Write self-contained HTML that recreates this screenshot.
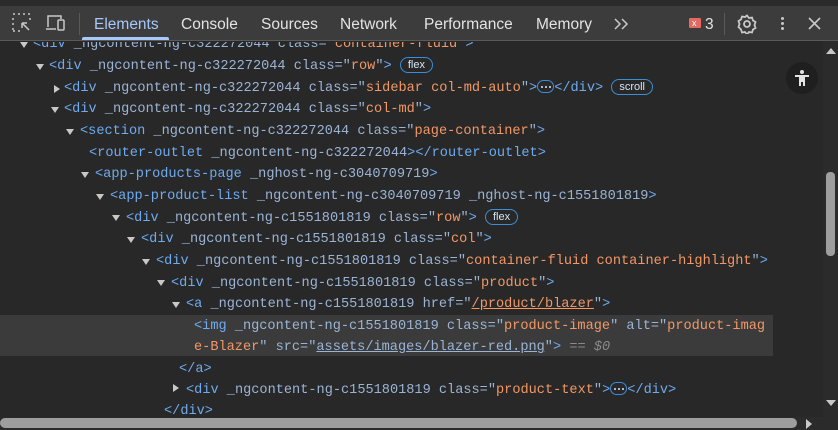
<!DOCTYPE html>
<html><head><style>
*{margin:0;padding:0;box-sizing:border-box}
body{width:838px;height:430px;background:#282828;overflow:hidden;position:relative;font-family:"Liberation Sans",sans-serif}
.top{position:absolute;left:0;top:0;width:838px;height:41px;background:#3c3c3c;border-bottom:1px solid #5a5a5a}
.top .strip{position:absolute;left:0;top:0;width:838px;height:6px;background:#2b2b2b}
.tab{position:absolute;top:16px;font-size:15.5px;color:#e3e3e3}
.l{position:absolute;white-space:pre;font-family:"Liberation Mono",monospace;font-size:13.6px;line-height:21.7px;color:#9ab4d6;margin-top:2px}
.t{color:#6eabf0}.v{color:#f29766}.a{color:#9ab4d6}.u{text-decoration:underline}
.tri{position:absolute;width:0;height:0;border-left:4px solid transparent;border-right:4px solid transparent;border-top:6px solid #c8c8c8;margin-top:2px}
.tr{position:absolute;width:0;height:0;border-top:4px solid transparent;border-bottom:4px solid transparent;border-left:6px solid #c8c8c8;margin-top:2px}
.badge{display:inline-block;border:1px solid #3c8ed6;border-radius:9px;font-size:11px;line-height:14px;padding:0 7px;color:#d6e6f5;vertical-align:1px;font-family:"Liberation Sans",sans-serif}
.dots{display:inline-block;position:relative;border:1px solid #3c8ed6;border-radius:8px;width:17px;height:13px;vertical-align:-2px}
.dots::after{content:"";position:absolute;left:3px;top:5px;width:2px;height:2px;background:#d6e6f5;border-radius:1px;box-shadow:4px 0 0 #d6e6f5,8px 0 0 #d6e6f5}
</style></head><body>
<div class="top"><div class="strip"></div>
<svg style="position:absolute;left:12px;top:13px" width="20" height="20" viewBox="0 0 20 20" fill="none" stroke="#c8c8c8" stroke-width="1.5"><path d="M1 1h2M6 1h2M11 1h2M16 1h2M1 5v2M1 10v2M1 15v2M18 5v2M1 18h2M6 18h2" /><path d="M10 10l7 7M10 10h5M10 10v5"/></svg>
<svg style="position:absolute;left:45px;top:14px" width="22" height="18" viewBox="0 0 22 18" fill="none" stroke="#c8c8c8" stroke-width="1.5"><path d="M3 13V2h13v3M1 15h10"/><rect x="13" y="6" width="6" height="10" rx="1"/></svg>
<div style="position:absolute;left:79px;top:13px;width:1px;height:22px;background:#5a5a5a"></div>
<div class="tab" style="left:94px;color:#a8c7fa">Elements</div>
<div style="position:absolute;left:82px;top:37px;width:87px;height:3px;background:#a8c7fa;border-radius:2px 2px 0 0"></div>
<div class="tab" style="left:181px">Console</div>
<div class="tab" style="left:261px">Sources</div>
<div class="tab" style="left:340px">Network</div>
<div class="tab" style="left:424px">Performance</div>
<div class="tab" style="left:536px">Memory</div>
<svg style="position:absolute;left:613px;top:18px" width="16" height="12" viewBox="0 0 16 12" fill="none" stroke="#c8c8c8" stroke-width="1.5"><path d="M2 1l5 5-5 5M9 1l5 5-5 5"/></svg>
<div style="position:absolute;left:689px;top:18px;width:12px;height:10px;background:#e46962;border-radius:1px"></div>
<div style="position:absolute;left:692px;top:13px;font-size:9px;color:#fff;line-height:20px">x</div>
<div class="tab" style="left:705px;top:16px;color:#e3e3e3">3</div>
<div style="position:absolute;left:724px;top:13px;width:1px;height:22px;background:#5a5a5a"></div>
<svg style="position:absolute;left:737px;top:14px" width="20" height="20" viewBox="0 0 20 20" fill="none" stroke="#c8c8c8" stroke-width="1.8"><circle cx="10" cy="10" r="3"/><path d="M10 1.5l2 2.5 3-.5 1 3 2.5 1.5-1 3 1 3-2.5 1.5-1 3-3-.5-2 2.5-2-2.5-3 .5-1-3L1.5 13l1-3-1-3L4 5.5l1-3 3 .5z"/></svg>
<div style="position:absolute;left:781px;top:17px;width:3px;height:3px;background:#c8c8c8;border-radius:2px;box-shadow:0 5px 0 #c8c8c8,0 10px 0 #c8c8c8"></div>
<svg style="position:absolute;left:808px;top:17px" width="13" height="13" viewBox="0 0 13 13" stroke="#c8c8c8" stroke-width="1.6"><path d="M1 1l11 11M12 1L1 12"/></svg>
</div>
<div style="position:absolute;left:0;top:315px;width:773px;height:41px;background:#3b3b3b"></div>
<div class="tri" style="left:20px;top:40px"></div><div class="l" style="left:33px;top:32px;clip-path:inset(8px 0 0 0)"><span class="t">&lt;div</span> _ngcontent-ng-c322272044 class=<span class="v">"container-fluid"</span><span class="t">&gt;</span></div>
<div class="tri" style="left:36px;top:62px"></div><div class="l" style="left:49px;top:54px"><span class="t">&lt;div</span> _ngcontent-ng-c322272044 class="<span class="v">row</span>"<span class="t">&gt;</span> <span class="badge">flex</span></div>
<div class="tr" style="left:54px;top:83px"></div><div class="l" style="left:64px;top:76px"><span class="t">&lt;div</span> _ngcontent-ng-c322272044 class="<span class="v">sidebar col-md-auto</span>"<span class="t">&gt;</span><span class="dots"></span><span class="t">&lt;/div&gt;</span> <span class="badge">scroll</span></div>
<div class="tri" style="left:51px;top:105px"></div><div class="l" style="left:64px;top:97px"><span class="t">&lt;div</span> _ngcontent-ng-c322272044 class="<span class="v">col-md</span>"<span class="t">&gt;</span></div>
<div class="tri" style="left:66px;top:127px"></div><div class="l" style="left:80px;top:119px"><span class="t">&lt;section</span> _ngcontent-ng-c322272044 class="<span class="v">page-container</span>"<span class="t">&gt;</span></div>
<div class="l" style="left:89px;top:141px"><span class="t">&lt;router-outlet</span> _ngcontent-ng-c322272044<span class="t">&gt;&lt;/router-outlet&gt;</span></div>
<div class="tri" style="left:81px;top:170px"></div><div class="l" style="left:95px;top:162px"><span class="t">&lt;app-products-page</span> _nghost-ng-c3040709719<span class="t">&gt;</span></div>
<div class="tri" style="left:96px;top:192px"></div><div class="l" style="left:110px;top:184px"><span class="t">&lt;app-product-list</span> _ngcontent-ng-c3040709719 _nghost-ng-c1551801819<span class="t">&gt;</span></div>
<div class="tri" style="left:112px;top:213px"></div><div class="l" style="left:126px;top:206px"><span class="t">&lt;div</span> _ngcontent-ng-c1551801819 class="<span class="v">row</span>"<span class="t">&gt;</span> <span class="badge">flex</span></div>
<div class="tri" style="left:127px;top:235px"></div><div class="l" style="left:141px;top:227px"><span class="t">&lt;div</span> _ngcontent-ng-c1551801819 class="<span class="v">col</span>"<span class="t">&gt;</span></div>
<div class="tri" style="left:142px;top:257px"></div><div class="l" style="left:156px;top:249px"><span class="t">&lt;div</span> _ngcontent-ng-c1551801819 class="<span class="v">container-fluid container-highlight</span>"<span class="t">&gt;</span></div>
<div class="tri" style="left:157px;top:278px"></div><div class="l" style="left:171px;top:271px"><span class="t">&lt;div</span> _ngcontent-ng-c1551801819 class="<span class="v">product</span>"<span class="t">&gt;</span></div>
<div class="tri" style="left:172px;top:300px"></div><div class="l" style="left:186px;top:292px"><span class="t">&lt;a</span> _ngcontent-ng-c1551801819 href="<span class="v u">/product/blazer</span>"<span class="t">&gt;</span></div>
<div class="l" style="left:194px;top:314px"><span class="t">&lt;img</span> _ngcontent-ng-c1551801819 class="<span class="v">product-image</span>" alt="<span class="v">product-imag</span></div>
<div class="l" style="left:194px;top:335px"><span class="v">e-Blazer</span>" src="<span class="u" style="color:#9ab4d6">assets/images/blazer-red.png</span>"<span class="t">&gt;</span> <span style="color:#8a8a8a">== <i>$0</i></span></div>
<div class="l" style="left:179px;top:357px"><span class="t">&lt;/a&gt;</span></div>
<div class="tr" style="left:173px;top:382px"></div><div class="l" style="left:186px;top:378px"><span class="t">&lt;div</span> _ngcontent-ng-c1551801819 class="<span class="v">product-text</span>"<span class="t">&gt;</span><span class="dots"></span><span class="t">&lt;/div&gt;</span></div>
<div class="l" style="left:164px;top:399px;height:16px;overflow:hidden"><span class="t">&lt;/div&gt;</span></div>
<div style="position:absolute;left:786px;top:62px;width:32px;height:32px;border-radius:16px;background:#1f1f1f"></div>
<svg style="position:absolute;left:792px;top:68px" width="20" height="20" viewBox="0 0 20 20" fill="#e3e3e3"><circle cx="10" cy="4" r="2"/><path d="M3 7h14v2h-4v9h-2v-4h-2v4H7V9H3z"/></svg>
<div style="position:absolute;left:823px;top:41px;width:15px;height:376px;background:#2b2b2b"></div>
<div style="position:absolute;left:826px;top:48px;border-left:5px solid transparent;border-right:5px solid transparent;border-bottom:6px solid #c8c8c8"></div>
<div style="position:absolute;left:826px;top:172px;width:9px;height:84px;background:#9e9e9e;border-radius:4px"></div>
<div style="position:absolute;left:826px;top:400px;border-left:5px solid transparent;border-right:5px solid transparent;border-top:6px solid #c8c8c8"></div>
<div style="position:absolute;left:0;top:417px;width:838px;height:13px;background:#2b2b2b"></div>
<div style="position:absolute;left:0;top:418px;width:797px;height:10px;background:#9e9e9e;border-radius:5px"></div>
<div style="position:absolute;left:806px;top:419px;border-top:5px solid transparent;border-bottom:5px solid transparent;border-left:6px solid #c8c8c8"></div>
</body></html>
